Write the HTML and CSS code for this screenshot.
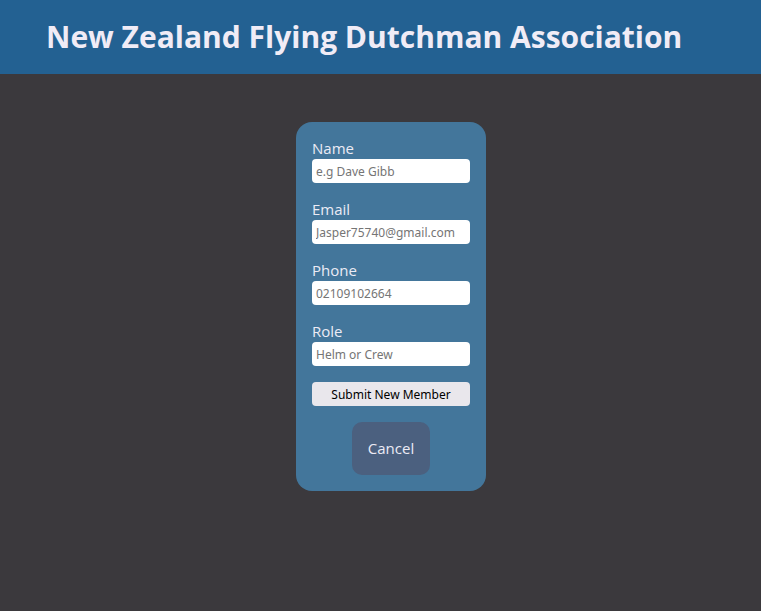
FILE: index.html
```html
<!DOCTYPE html>
<html lang="en">
<head>
<meta charset="utf-8">
<meta name="viewport" content="width=device-width, initial-scale=1">
<title>New Zealand Flying Dutchman Association</title>
<link rel="stylesheet" href="styles.css">
</head>
<body>
<header class="site-header">
  <h1 class="site-title">New Zealand Flying Dutchman Association</h1>
</header>
<main class="page">
  <form class="member-form">
    <div class="field">
      <label for="name">Name</label>
      <input id="name" type="text" placeholder="e.g Dave Gibb">
    </div>
    <div class="field">
      <label for="email">Email</label>
      <input id="email" type="email" placeholder="Jasper75740@gmail.com">
    </div>
    <div class="field">
      <label for="phone">Phone</label>
      <input id="phone" type="tel" placeholder="02109102664">
    </div>
    <div class="field">
      <label for="role">Role</label>
      <input id="role" type="text" placeholder="Helm or Crew">
    </div>
    <button class="submit" type="submit">Submit New Member</button>
    <a class="cancel" href="#">Cancel</a>
  </form>
</main>
</body>
</html>
```
FILE: styles.css
```css
body {
  margin: 0;
  background: #3b393d;
  color: #ebebf5;
  font: 15px/21px "Open Sans", "Noto Sans", sans-serif;
}

.site-header {
  padding: 16px 46px;
  background: #236192;
}

.site-title {
  margin: 0;
  color: #f0ecf6;
  font-size: 30px;
  line-height: 42px;
}

.page {
  display: flex;
  justify-content: center;
  padding: 48px 16px 48px 37px;
}

.member-form {
  display: flex;
  flex-direction: column;
  gap: 16px;
  padding: 16px;
  border-radius: 16px;
  background: #43769b;
}

.field {
  display: flex;
  flex-direction: column;
}

.field input,
.submit {
  box-sizing: border-box;
  width: 158px;
  height: 24px;
  padding: 0 4px;
  border: 0;
  border-radius: 4px;
  background: #fff;
  font: 12px "Noto Sans", sans-serif;
}

.field input::placeholder {
  color: #757575;
}

.submit {
  background: #e9e7ec;
  color: #000;
}

.cancel {
  align-self: center;
  padding: 16px;
  border-radius: 10px;
  background: #4b607f;
  color: inherit;
  text-decoration: none;
}
```
